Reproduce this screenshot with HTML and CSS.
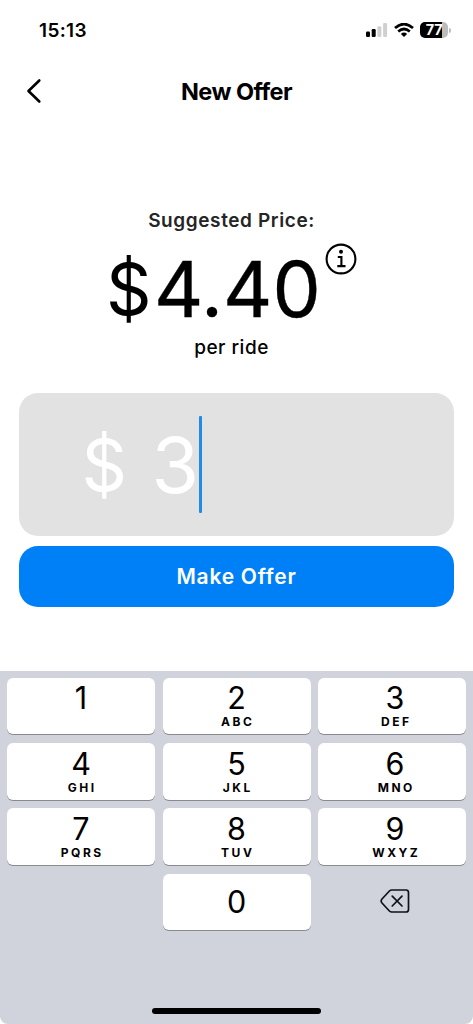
FILE: index.html
```
<!DOCTYPE html>
<html lang="en">
<head>
<meta charset="utf-8">
<title>New Offer</title>
<link rel="stylesheet" href="styles.css">
</head>
<body>
<main class="screen">
  <header class="status">
    <span class="time">15:13</span>
    <div class="indicators">
      <svg class="signal" width="22" height="14" viewBox="0 0 22 14">
        <rect x="0" y="8.5" width="4" height="5.5" rx="1.2"/>
        <rect x="5.7" y="6" width="4" height="8" rx="1.2"/>
        <rect x="11.4" y="3.2" width="4" height="10.8" rx="1.2" fill="#d0d0d0"/>
        <rect x="17.1" y="0" width="4" height="14" rx="1.2" fill="#d0d0d0"/>
      </svg>
      <svg class="wifi" width="20" height="14" viewBox="0 0 20 14" fill="none" stroke="#000" stroke-width="2.7">
        <path d="M1 5.1Q10-2.9 19 5.1"/>
        <path d="M4.2 8.5Q10 3.5 15.8 8.5"/>
        <path d="M6.9 10.9Q10 8.1 13.1 10.9L10 14Z" fill="#000" stroke="none"/>
      </svg>
      <div class="battery"><span class="level">77</span></div>
      <span class="tip"></span>
    </div>
  </header>
  <nav class="bar">
    <svg class="back" width="16" height="26" viewBox="0 0 16 26" fill="none" stroke="#000" stroke-width="2.6" stroke-linecap="round" stroke-linejoin="round"><path d="M13.3 2.5 2.5 13l10.8 10.5"/></svg>
    <h1 class="title">New Offer</h1>
  </nav>
  <section class="suggestion">
    <p class="caption">Suggested Price:</p>
    <div class="price-row">
      <span class="price"><span class="sign">$</span><span class="value">4.40</span></span>
      <svg class="info" width="32" height="32" viewBox="0 0 32 32" fill="none" stroke="#000" stroke-width="2.1">
        <circle cx="16" cy="16" r="14.4"/>
        <circle cx="16" cy="8.7" r="2" fill="#000" stroke="none"/>
        <path d="M12.8 14H16.4V23.1M12.3 23.1H20.5"/>
      </svg>
    </div>
    <p class="unit">per ride</p>
  </section>
  <section class="form">
    <div class="field"><span class="currency">$</span><span class="amount">3</span><span class="caret"></span></div>
    <button class="submit">Make Offer</button>
  </section>
  <section class="keyboard">
    <div class="keys">
      <div class="key"><b class="digit">1</b></div>
      <div class="key"><b class="digit">2</b><span class="letters">ABC</span></div>
      <div class="key right"><b class="digit">3</b><span class="letters">DEF</span></div>
      <div class="key"><b class="digit">4</b><span class="letters">GHI</span></div>
      <div class="key"><b class="digit">5</b><span class="letters">JKL</span></div>
      <div class="key right"><b class="digit">6</b><span class="letters">MNO</span></div>
      <div class="key"><b class="digit">7</b><span class="letters">PQRS</span></div>
      <div class="key"><b class="digit">8</b><span class="letters">TUV</span></div>
      <div class="key right"><b class="digit">9</b><span class="letters">WXYZ</span></div>
      <div class="key zero"><b class="digit">0</b></div>
      <div class="delete">
        <svg width="30" height="26" viewBox="0 0 30 26" fill="none" stroke="#10101c" stroke-width="1.7" stroke-linecap="round" stroke-linejoin="round">
          <path d="M11.8 2H26Q28.5 2 28.5 4.5V21.5Q28.5 24 26 24H11.8Q10.4 24 9.4 23L2 15Q.3 13 2 11L9.4 3Q10.4 2 11.8 2Z"/>
          <path d="M12.2 8.2 22 18M22 8.2 12.2 18"/>
        </svg>
      </div>
    </div>
    <div class="home"></div>
  </section>
</main>
</body>
</html>
```
FILE: styles.css
```
* { box-sizing: border-box; }
body { margin: 0; background: #fff; font-family: Inter, "Liberation Sans", sans-serif; color: #000; }
.screen { width: 473px; height: 1024px; display: flex; flex-direction: column; overflow: hidden; }
.status { height: 60px; flex: none; display: flex; align-items: center; justify-content: space-between; padding: 0 22px 0 39px; }
.time { padding-top: 2px; font-size: 19px; font-weight: 600; line-height: 24px; letter-spacing: .35px; }
.indicators { display: flex; align-items: center; }
.wifi { margin-left: 6px; }
.battery { width: 28px; height: 16px; margin-left: 6px; border-radius: 5px; background: linear-gradient(90deg, #000 77%, #bdbdbd 77%); display: flex; align-items: center; justify-content: center; }
.level { color: #fff; font-size: 14.5px; font-weight: 700; line-height: 16px; letter-spacing: -.4px; }
.tip { width: 2px; height: 5px; margin-left: 1px; border-radius: 0 2px 2px 0; background: #bdbdbd; }
.bar { height: 62px; flex: none; display: grid; grid-template-columns: 60px 1fr 60px; align-items: center; }
.back { margin-left: 26px; }
.title { margin: 0; padding-top: 1px; text-align: center; font-size: 23.5px; font-weight: 700; line-height: 30px; letter-spacing: -.55px; }
.suggestion { height: 271px; flex: none; padding-top: 87px; text-align: center; }
.caption { margin: 0; font-size: 19px; font-weight: 600; line-height: 24px; letter-spacing: .6px; color: #252525; padding-right: 10px; }
.price-row { height: 103px; padding: 10px 0 0 106px; display: flex; align-items: flex-start; }
.price { width: 219px; display: flex; align-items: center; line-height: 92px; }
.sign { width: 48px; text-align: left; font-size: 71px; line-height: 92px; }
.value { font-size: 76.5px; letter-spacing: .1px; -webkit-text-stroke: .4px #000; }
.info { flex: none; }
.unit { margin: 0; font-size: 19px; font-weight: 500; line-height: 24px; letter-spacing: .5px; padding-right: 10px; }
.form { height: 278px; flex: none; padding: 0 19.4px; display: flex; flex-direction: column; gap: 10px; }
.field { height: 143px; flex: none; border-radius: 19px; background: #e2e2e2; display: flex; align-items: center; padding-left: 62px; color: #fff; font-size: 77px; line-height: 96px; }
.currency { width: 70px; font-size: 71px; }
.amount { width: 48px; }
.caret { width: 2.5px; height: 97px; background: #218be8; border-radius: 1px; }
.submit { height: 60.5px; flex: none; border: 0; border-radius: 19px; padding: 2px 0 0; background: #0080f7; color: #fff; font: 600 21px/26px Inter, "Liberation Sans", sans-serif; letter-spacing: .75px; }
.keyboard { flex: 1; padding: 7px 7px 10px; background: #d0d3dc; border-radius: 0 0 8px 8px; display: flex; flex-direction: column; justify-content: space-between; align-items: center; }
.keys { width: 459px; display: grid; grid-template-columns: repeat(3, 1fr); grid-template-rows: 56px 57px 57px 56px; gap: 8.5px 7.5px; }
.key { background: #fff; border-radius: 6px; box-shadow: 0 1px 0 #898a8f; display: flex; flex-direction: column; align-items: center; justify-content: flex-end; padding-bottom: 6px; }
.key:first-child { padding-bottom: 18px; }
.key.right { padding-left: 6px; }
.digit { font-size: 30.5px; font-weight: 400; line-height: 37px; }
.letters { font-size: 12px; font-weight: 700; line-height: 12px; letter-spacing: 2.5px; margin-right: -2.5px; }
.key.zero { grid-column: 2; padding-bottom: 10px; }
.delete { display: flex; align-items: center; justify-content: center; padding: 0 0 2px 6px; }
.home { width: 169px; height: 6px; border-radius: 3px; background: #000; }
```
